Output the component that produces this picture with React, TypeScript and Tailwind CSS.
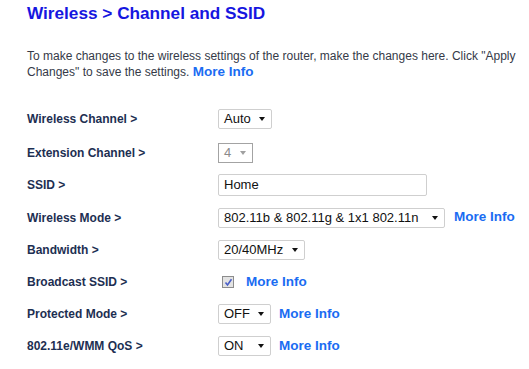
const Arrow = ({ disabled }: { disabled?: boolean }) => (
  <span
    className={
      "ml-auto h-0 w-0 border-x-[3.5px] border-t-[4px] border-x-transparent " +
      (disabled ? "border-t-[#a0a0a0]" : "border-t-[#111]")
    }
  />
)

const Select = ({ value, w, disabled }: { value: string; w: string; disabled?: boolean }) => (
  <div
    className={
      "flex h-[20px] items-center pl-[5px] pr-[6px] text-[13px] " +
      w +
      (disabled
        ? " border border-[#a3a3a3] text-[#8a8a8a]"
        : " rounded-[2px] border border-[#cfcfcf] text-[#111]")
    }
  >
    <span className="whitespace-nowrap">{value}</span>
    <Arrow disabled={disabled} />
  </div>
)

const MoreInfo = ({ className = "" }: { className?: string }) => (
  <span className={"text-[13.5px] font-bold text-[#1a6cf2] " + className}>More Info</span>
)

const Checkbox = () => (
  <div className="ml-[4px] flex h-[12px] w-[12px] items-center justify-center border border-[#8c8c8c] bg-[#e3e3e3]">
    <svg width="9" height="9" viewBox="0 0 9 9">
      <path d="M1.5 4.5 L3.5 7 L7.5 1.2" fill="none" stroke="#4a5fc8" strokeWidth="1.6" />
    </svg>
  </div>
)

const Row = ({ label, h, children }: { label: string; h: string; children: React.ReactNode }) => (
  <div className={"flex items-center " + h}>
    <div className="w-[191px] text-[12px] font-bold text-[#1d2f52]">{label}</div>
    <div className="flex items-center">{children}</div>
  </div>
)

export default function App() {
  return (
    <div className="h-[369px] w-[529px] bg-white pl-[27px] font-['Liberation_Sans',Arial,sans-serif]">
      <h1 className="pt-[3px] text-[17.2px] font-bold leading-[20px] text-[#1616e0]">
        Wireless &gt; Channel and SSID
      </h1>
      <p className="mt-[25px] whitespace-nowrap text-[12px] leading-[16px] text-[#353a48]">
        To make changes to the wireless settings of the router, make the changes here. Click "Apply
        <br />
        Changes" to save the settings. <MoreInfo />
      </p>
      <div className="mt-[22px] flex flex-col">
        <Row label="Wireless Channel >" h="h-[34px]">
          <Select value="Auto" w="w-[54px]" />
        </Row>
        <Row label="Extension Channel >" h="h-[33px]">
          <Select value="4" w="w-[35px]" disabled />
        </Row>
        <Row label="SSID >" h="h-[32px]">
          <div className="flex h-[22px] w-[209px] items-center rounded-[2px] border border-[#cfcfcf] pl-[5px] text-[13px] text-[#111]">
            Home
          </div>
        </Row>
        <Row label="Wireless Mode >" h="h-[33px]">
          <Select value="802.11b & 802.11g & 1x1 802.11n" w="w-[227px]" />
          <MoreInfo className="ml-[9px]" />
        </Row>
        <Row label="Bandwidth >" h="h-[32px]">
          <Select value="20/40MHz" w="w-[87px]" />
        </Row>
        <Row label="Broadcast SSID >" h="h-[32px]">
          <Checkbox />
          <MoreInfo className="ml-[12px]" />
        </Row>
        <Row label="Protected Mode >" h="h-[32px]">
          <Select value="OFF" w="w-[53px]" />
          <MoreInfo className="ml-[8px]" />
        </Row>
        <Row label="802.11e/WMM QoS >" h="h-[32px]">
          <Select value="ON" w="w-[53px]" />
          <MoreInfo className="ml-[8px]" />
        </Row>
      </div>
    </div>
  )
}
